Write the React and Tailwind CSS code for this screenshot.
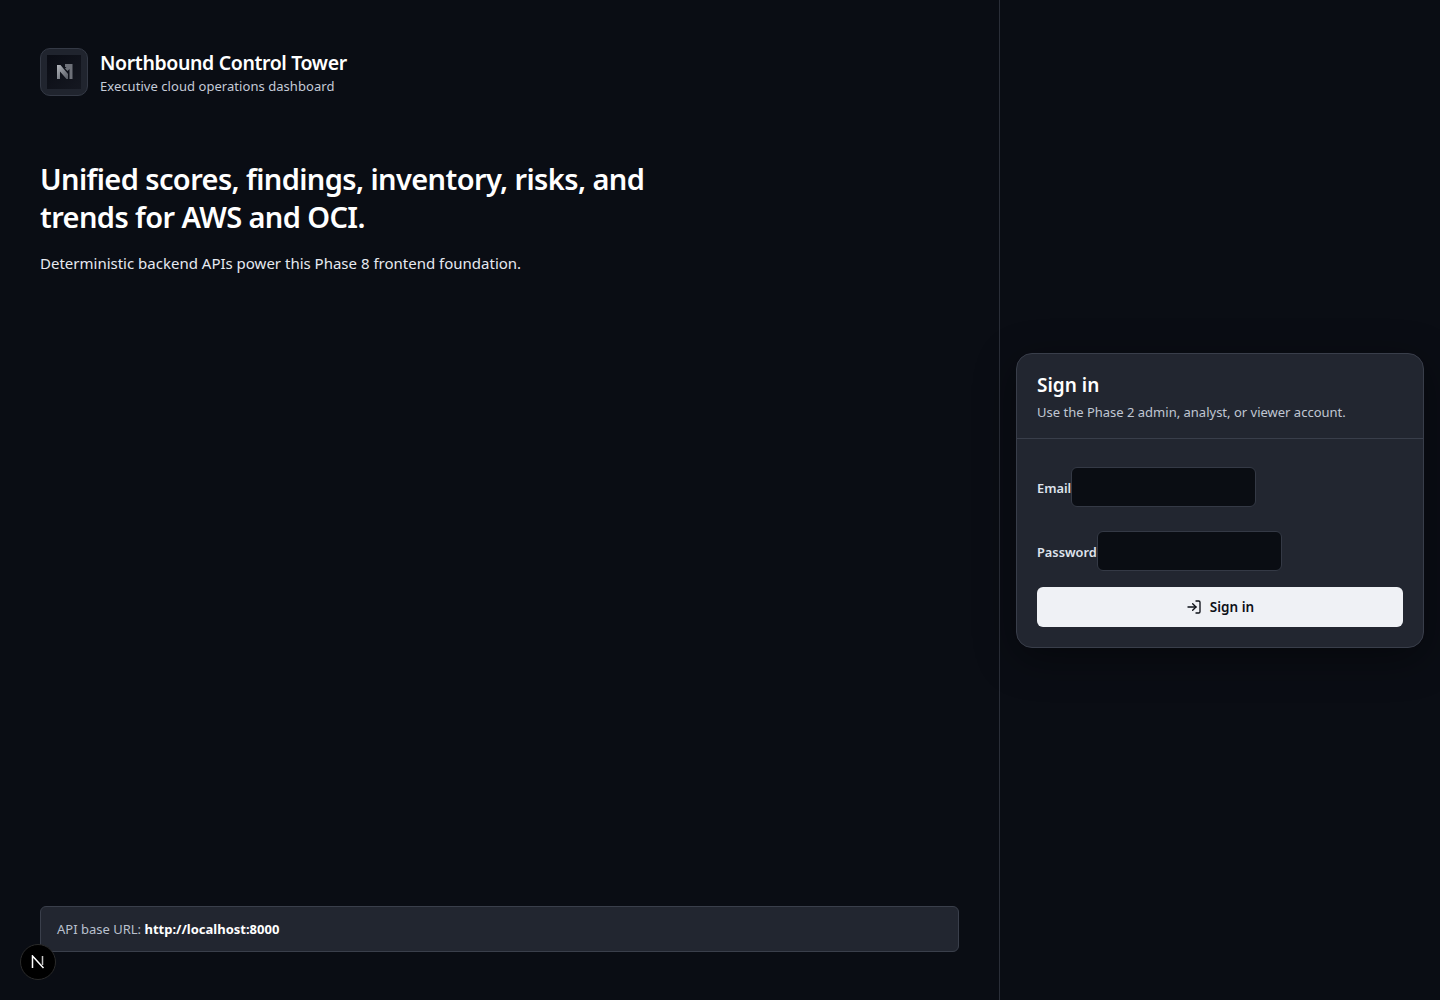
import React from "react";
import { LogIn } from "lucide-react";

const font = "font-['Noto_Sans','Liberation_Sans',sans-serif]";

const Field = ({ label, type }) => (
  <label className="flex items-center text-[12.8px] font-semibold text-[#dfe3ec]">
    <span className="mt-[4px]">{label}</span>
    <input
      type={type}
      className="h-10 w-[185px] rounded-md border border-[#343945] bg-[#0a0d13] outline-none"
    />
  </label>
);

const App = () => {
  return (
    <div className={`${font} grid min-h-[1000px] grid-cols-[1000px_440px] bg-[#0a0d14] text-white`}>
      <section className="flex flex-col justify-between border-r border-[#2a2e38] px-10 pt-12 pb-12">
        <div>
          <div className="flex items-center gap-3">
            <div className="flex h-12 w-12 items-center justify-center rounded-[10px] border border-[#343945] bg-[#20242e]">
              <div className="flex h-[34px] w-[34px] items-center justify-center bg-gradient-to-br from-[#0a0c14] to-[#151821]">
                <svg width="18" height="18" viewBox="0 0 18 18" fill="none">
                  <defs>
                    <linearGradient id="mark" x1="0" y1="0" x2="1" y2="1">
                      <stop offset="0" stopColor="#b4b7bd" />
                      <stop offset="1" stopColor="#565a63" />
                    </linearGradient>
                  </defs>
                  <path d="M2 2h3.500L13 11v5h-1.500L5 8.500V16H2z" fill="url(#mark)" />
                  <path d="M10 1h7.500v15h-3V6l-2 2L10 5.500l1.500-1.500H10z" fill="#6d7078" />
                </svg>
              </div>
            </div>
            <div className="pt-[2px]">
              <h1 className="text-[19.5px] leading-[26px] font-semibold tracking-[-0.37px]">Northbound Control Tower</h1>
              <p className="text-[13px] leading-[20px] tracking-[0.05px] text-[#c5cbd8]">Executive cloud operations dashboard</p>
            </div>
          </div>

          <h2 className="mt-[64px] max-w-[640px] text-[29px] leading-[38px] font-semibold tracking-[-0.6px]">
            Unified scores, findings, inventory, risks, and trends for AWS and OCI.
          </h2>
          <p className="mt-[15px] text-[15px] leading-[24px] text-[#e6e9f0]">
            Deterministic backend APIs power this Phase 8 frontend foundation.
          </p>
        </div>

        <div className="flex h-[46px] items-center rounded-md border border-[#3a3f4b] bg-[#222630] px-4 pt-[2px] text-[13px] text-[#b9c0ce]">
          <span>
            API base URL: <strong className="font-bold text-white">http://localhost:8000</strong>
          </span>
        </div>
      </section>

      <section className="flex items-center justify-center px-4">
        <div className="w-full rounded-2xl border border-[#393e4a] bg-[#222630] shadow-[0_10px_40px_rgba(0,0,0,0.4)]">
          <div className="border-b border-[#393e4a] px-5 pt-[17px] pb-4">
            <h3 className="text-[19px] leading-[28px] font-semibold">Sign in</h3>
            <p className="mt-[3px] text-[13px] leading-[20px] text-[#c0c6d3]">Use the Phase 2 admin, analyst, or viewer account.</p>
          </div>
          <form className="flex flex-col gap-4 px-5 pt-7 pb-5">
            <div className="flex flex-col gap-6">
              <Field label="Email" type="email" />
              <Field label="Password" type="password" />
            </div>
            <button
              type="button"
              className="flex h-10 items-center justify-center gap-2 rounded-md bg-[#eff1f5] pt-[2px] text-[13.5px] font-semibold text-[#0d1017]"
            >
              <LogIn size={16} className="-mt-[2px]" />
              Sign in
            </button>
          </form>
        </div>
      </section>

      <div className="fixed bottom-[20px] left-[20px] flex h-9 w-9 items-center justify-center rounded-full border border-[#2b2b2b] bg-black">
        <svg width="14" height="14" viewBox="0 0 14 14" fill="none">
          <path d="M1.500 13V1L12.500 13" stroke="white" strokeWidth="1.500" />
          <path d="M11.500 1v9" stroke="#c4c4c4" strokeWidth="1.500" />
        </svg>
      </div>
    </div>
  );
};

export default App;
